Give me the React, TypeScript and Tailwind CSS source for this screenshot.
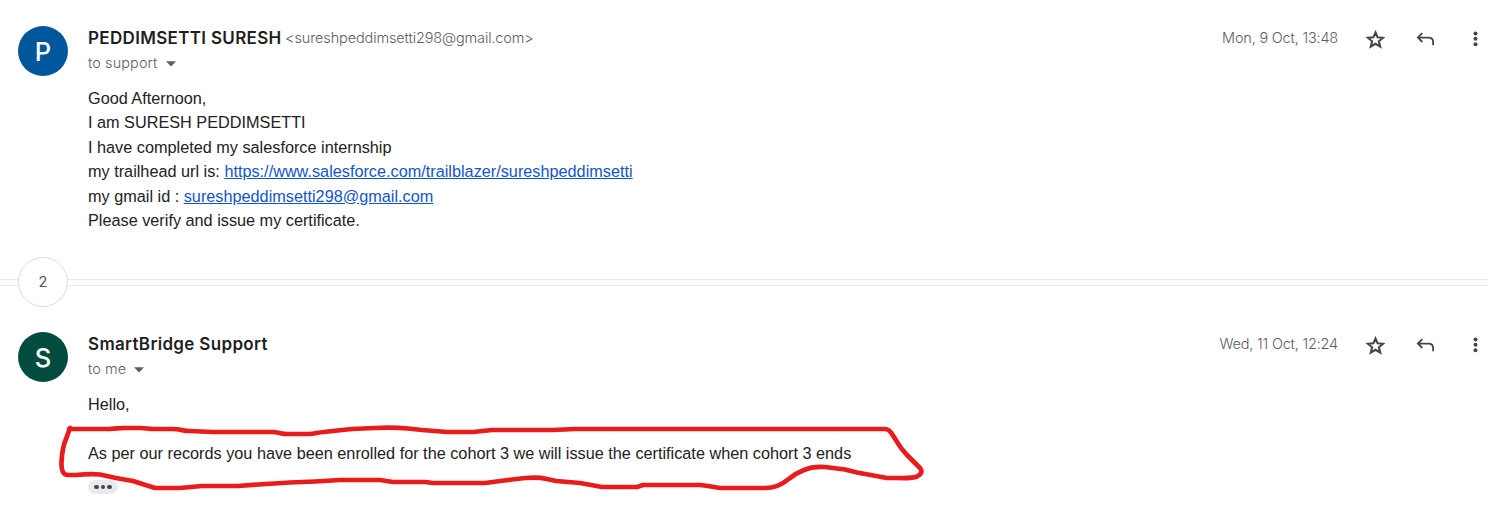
import type { ReactNode } from 'react';

function Star() {
  return (
    <svg width="20" height="20" viewBox="0 0 20 20" className="text-[#444746]">
      <path
        d="M10.5 2.5 L12.6 7.3 L18 7.8 L13.9 11.3 L15.2 16.6 L10.5 13.8 L5.8 16.6 L7.1 11.3 L3 7.8 L8.4 7.3 Z"
        fill="none"
        stroke="currentColor"
        strokeWidth="2.1"
      />
    </svg>
  );
}

function Reply() {
  return (
    <svg width="20" height="20" viewBox="0 0 20 20" className="text-[#444746]">
      <path d="M7.3 3.2 L2.9 7.6 L7.3 12 M3.1 7.6 H13.5 Q18.1 7.6 18.1 12 V15.2" fill="none" stroke="currentColor" strokeWidth="1.8" />
    </svg>
  );
}

function More() {
  return (
    <svg width="20" height="20" viewBox="0 0 20 20" className="text-[#444746]">
      <circle cx="10.5" cy="3.4" r="2" fill="currentColor" />
      <circle cx="10.5" cy="8.7" r="2" fill="currentColor" />
      <circle cx="10.5" cy="14.2" r="2" fill="currentColor" />
    </svg>
  );
}

interface MessageProps {
  initial: string;
  avatar: string;
  name: string;
  email?: string;
  to: string;
  date: string;
  children: ReactNode;
}

function Message({ initial, avatar, name, email, to, date, children }: MessageProps) {
  return (
    <article className="flex pl-[18px]">
      <div className={`flex size-[50px] shrink-0 items-center justify-center rounded-full pt-[2px] font-[Inter] text-[25.5px] font-medium text-white ${avatar}`}>
        {initial}
      </div>
      <div className="ml-5 flex-1">
        <header className="flex h-[60px] justify-between">
          <div>
            <div className="flex h-6 items-center whitespace-nowrap">
              <h3 className="font-[Inter] text-[17px] font-semibold tracking-[0.33px] text-[#1f1f1f]">{name}</h3>
              {email && <span className="ml-[3.5px] font-[Inter] text-[14.5px] font-[350] tracking-[-0.13px] text-[#5e5e5e]">{email}</span>}
            </div>
            <div className="flex h-[26px] items-center font-[Inter] text-[14.5px] font-[350] tracking-[0.08px] text-[#5e5e5e]">
              <span>{to}</span>
              <svg width="10" height="6" viewBox="0 0 10 6" className="mt-[2px] ml-2">
                <path d="M0 0.3 H10 L5 5.5 Z" fill="#5e5e5e" />
              </svg>
            </div>
          </div>
          <div className="flex h-6 items-center pr-[17px]">
            <span className="mr-[27px] font-[Inter] text-[14.5px] font-[350] tracking-[-0.2px] text-[#5e5e5e]">{date}</span>
            <div className="flex gap-[30px] pt-[3px]">
              <Star />
              <Reply />
              <More />
            </div>
          </div>
        </header>
        {children}
      </div>
    </article>
  );
}

export default function App() {
  return (
    <main className="relative h-[510px] w-[1502px] overflow-hidden bg-white pt-[26px] font-['Liberation_Sans',Arial,sans-serif] text-[16.25px] leading-[24.375px] text-[#222222]">
      <Message
        initial="P"
        avatar="bg-[#01579b]"
        name="PEDDIMSETTI SURESH"
        email="<sureshpeddimsetti298@gmail.com>"
        to="to support"
        date="Mon, 9 Oct, 13:48"
      >
        <div className="h-[171px]">
          <p>Good Afternoon,</p>
          <p>I am SURESH PEDDIMSETTI</p>
          <p>I have completed my salesforce internship</p>
          <p>
            my trailhead url is:{' '}
            <a className="text-[#1155cc] underline">https://www.salesforce.com/trailblazer/sureshpeddimsetti</a>
          </p>
          <p>
            my gmail id : <a className="text-[#1155cc] underline">sureshpeddimsetti298@gmail.com</a>
          </p>
          <p>Please verify and issue my certificate.</p>
        </div>
      </Message>

      <div className="flex h-[50px] items-center">
        <div className="h-[7px] w-[18px] border-y border-[#e8eaed]" />
        <div className="flex size-[50px] items-center justify-center rounded-full border border-[#dadce0] font-[Roboto] text-[15px] text-[#50545a]">2</div>
        <div className="h-[7px] w-[1420px] border-y border-[#e8eaed]" />
      </div>

      <div className="h-[25px]" />

      <Message initial="S" avatar="bg-[#004d40]" name="SmartBridge Support" to="to me" date="Wed, 11 Oct, 12:24">
        <p>Hello,</p>
        <p className="mt-[24.375px]">
          As per our records you have been enrolled for the cohort 3 we will issue the certificate when cohort 3 ends
        </p>
        <div className="mt-[15px] flex h-[14px] w-[30px] items-center justify-center gap-[2px] rounded-full bg-[#e8eaed]">
          <i className="size-[4.5px] rounded-full bg-[#444746]" />
          <i className="size-[4.5px] rounded-full bg-[#444746]" />
          <i className="size-[4.5px] rounded-full bg-[#444746]" />
        </div>
      </Message>

      <svg className="pointer-events-none absolute inset-0" width="1502" height="510" viewBox="0 0 1502 510">
        <path
          d="M69 429 H110 C118 428.5 118 428 125 428 H140 C147 428 147 429 154 429 H172 C182 429 182 431 190 431 L213 432 H273 C282 432.5 280 434 288 434 H308 C316 434 316 432.5 324 432 L342 430 L352 429 L375 428 Q392 427 408 428.5 L422 430 L447 432 H473 L492 430 H553 L575 429 H885 Q889 429 892 434 L901 448 L907 455 L920 468 Q924 473 917 476.5 Q912 478.5 898 478 H887 L857 472.5 L845 469.5 L825 467 Q813 466 804 470 Q796 473 788 479.5 Q778 488 765 488 H720 L708 486 L700 485 H643 L637 487 H602 L580 483 L556 481 L547 479 Q539 477 525 478 L508 480 L485 483 H433 L425 482 H393 L380 480 H340 L315 481.5 L290 482.5 L258 484.5 L238 486 H202 L180 488 H155 L133 481 L116 478 L100 474.5 Q90 473.5 76 475 H68 Q61 475 61.5 463 Q62 448 66 439 L70 428"
          fill="none"
          stroke="#e81c1c"
          strokeWidth="4.7"
          strokeLinecap="round"
          strokeLinejoin="round"
        />
      </svg>
    </main>
  );
}
